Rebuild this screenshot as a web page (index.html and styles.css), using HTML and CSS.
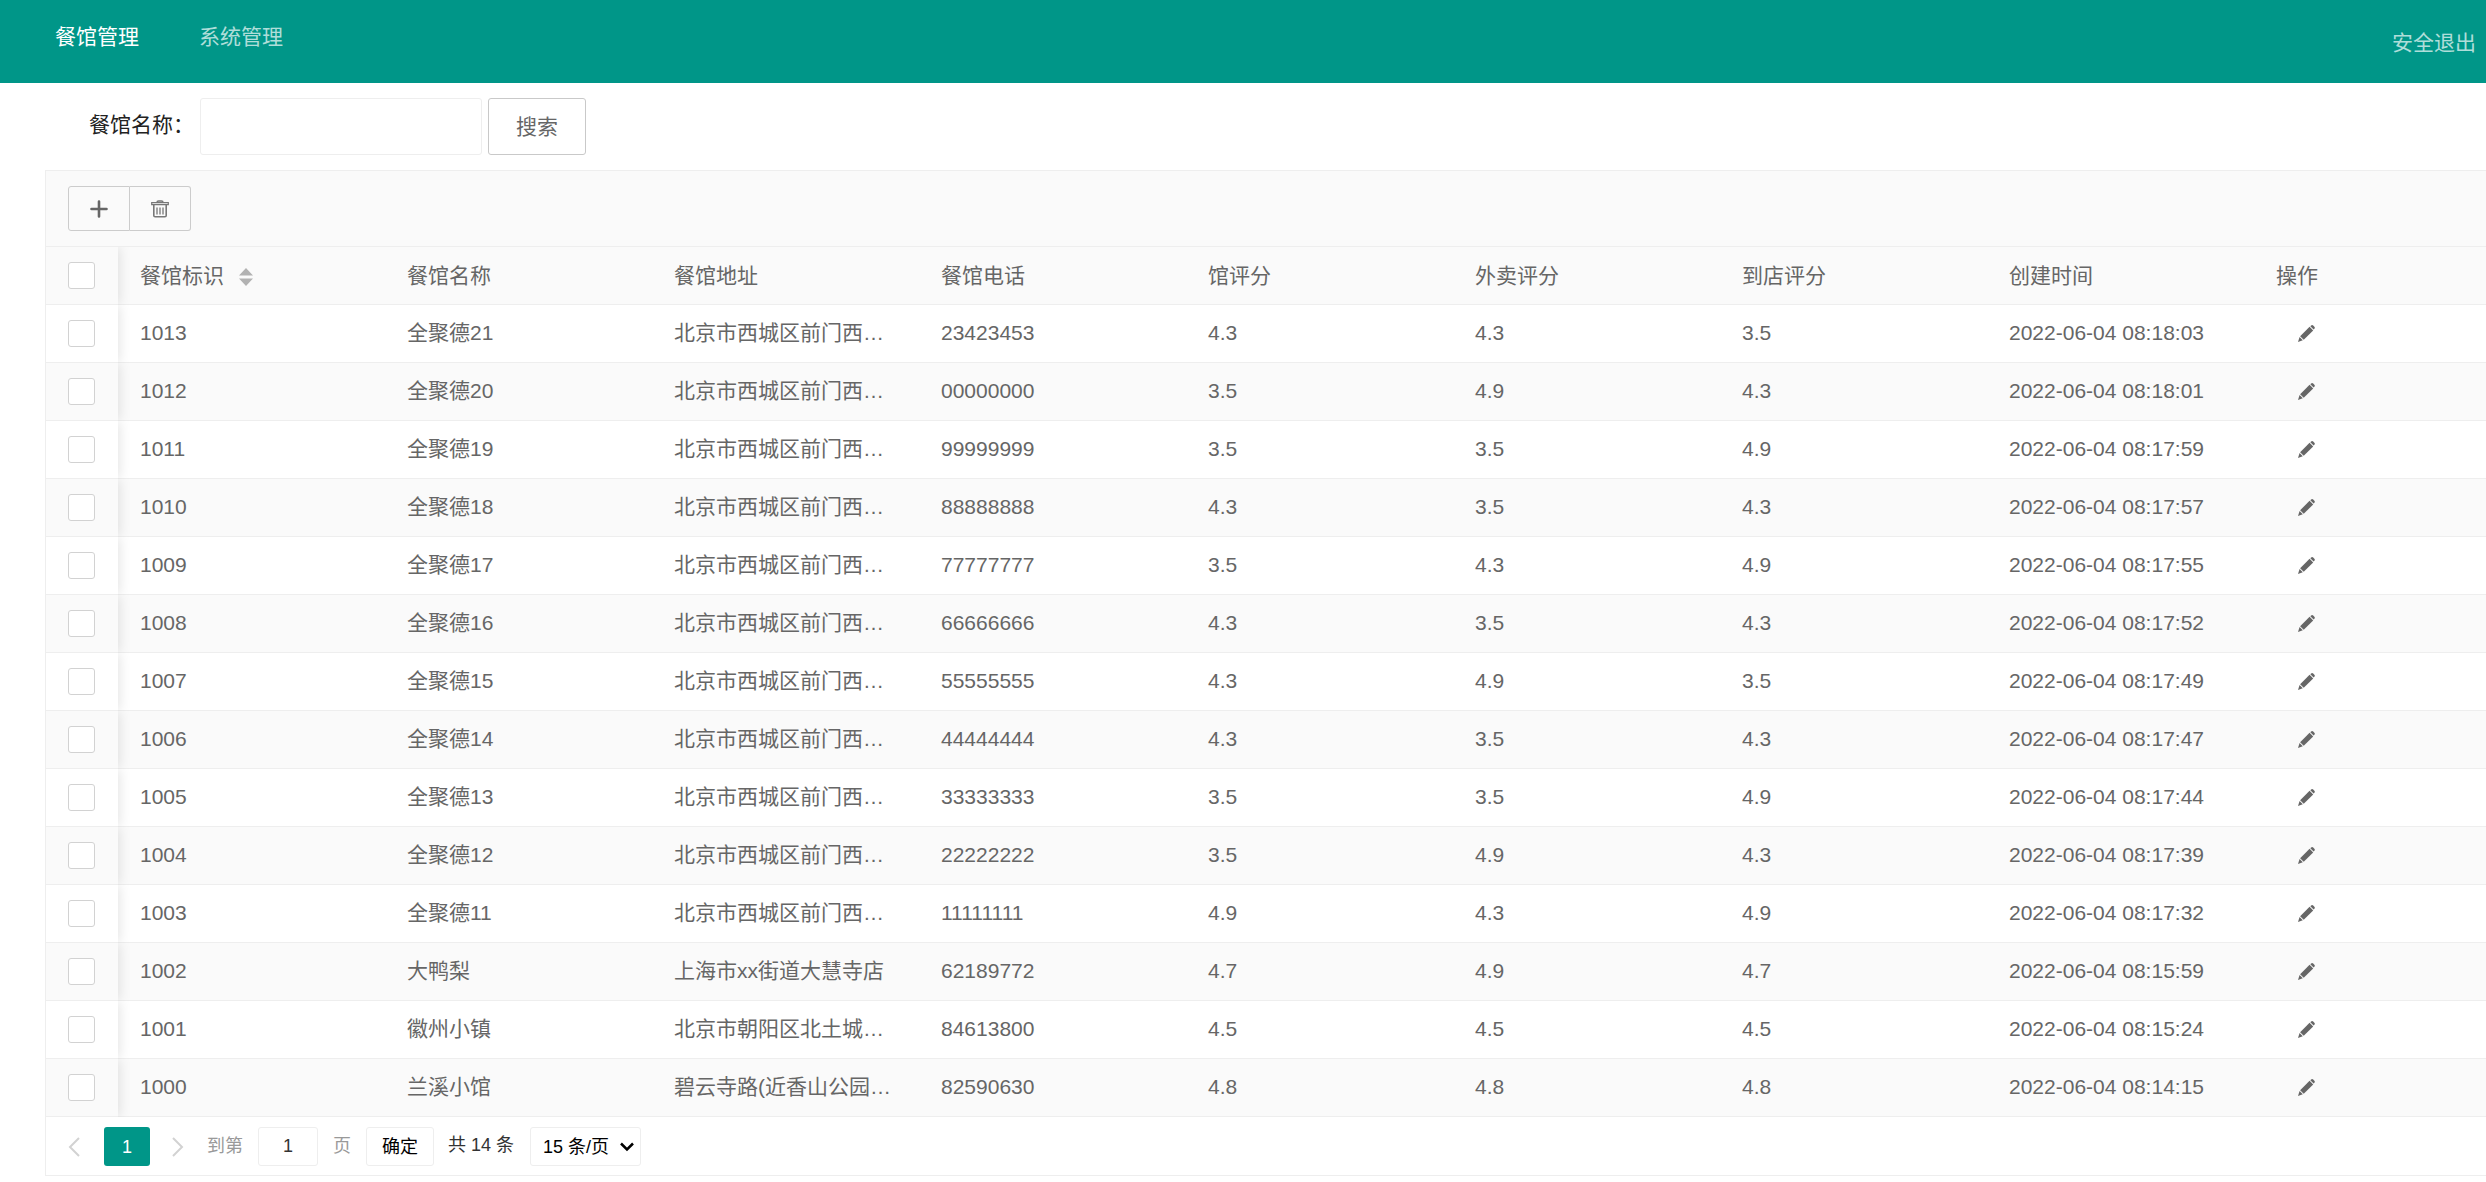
FILE: index.html
```
<!DOCTYPE html>
<html lang="zh-CN">
<head>
    <meta charset="utf-8">
    <title>餐馆管理</title>
    <link rel="stylesheet" href="styles.css">
</head>
<body>
    <!-- 图标 -->
    <svg class="icon-defs" aria-hidden="true">
        <symbol id="icon-edit" viewBox="0 0 16 16">
            <path d="M11.6 1.1l.7-.6a1.5 1.5 0 0 1 2 0l1.1 1.1a1.5 1.5 0 0 1 0 2l-.7.7z"/>
            <path d="M10.9 1.7l3.4 3.4-8.9 8.8-3.4-3.3z"/>
            <path d="M1.5 11.4l3 3L0 16z"/>
        </symbol>
    </svg>

    <div class="header">
        <nav class="nav">
            <a class="active" href="#">餐馆管理</a>
            <a href="#">系统管理</a>
        </nav>
        <a class="logout" href="#">安全退出</a>
    </div>

    <form class="search" onsubmit="return false">
        <label for="keyword">餐馆名称：</label>
        <input type="text" id="keyword">
        <button type="submit">搜索</button>
    </form>

    <div class="table-view">
        <div class="toolbar">
            <button type="button" aria-label="添加">
                <svg width="18" height="18" viewBox="0 0 18 18"><path d="M9 1.5v15M1.5 9h15" stroke="#666" stroke-width="2.6" stroke-linecap="round"/></svg>
            </button>
            <button type="button" aria-label="删除">
                <svg width="18" height="18" viewBox="0 0 18 18" fill="none" stroke="#777">
                    <path d="M6 2.5q0-1.5 1.5-1.5h3q1.500 0 1.500 1.5" stroke-width="1.5"/>
                    <path d="M.7 2.7h16.600v2H.7z" stroke-width="1.2"/>
                    <path d="M2.8 5v10.5q0 1.300 1.3 1.300h9.800q1.300 0 1.300-1.300V5" stroke-width="1.6"/>
                    <path d="M6 7.5v7M9 7.5v7M12 7.5v7" stroke-width="1.3"/>
                </svg>
            </button>
        </div>

        <table>
            <colgroup>
                <col class="col-check">
                <col class="col-data" span="8">
                <col>
            </colgroup>
            <thead>
                <tr>
                    <th class="check"><input type="checkbox" aria-label="全选"></th>
                    <th>餐馆标识
                        <svg class="sort" width="14" height="18" viewBox="0 0 14 18"><path d="M7 0l7 7.5H0zM7 18l7-7.5H0z" fill="#b2b2b2"/></svg>
                    </th>
                    <th>餐馆名称</th>
                    <th>餐馆地址</th>
                    <th>餐馆电话</th>
                    <th>馆评分</th>
                    <th>外卖评分</th>
                    <th>到店评分</th>
                    <th>创建时间</th>
                    <th>操作</th>
                </tr>
            </thead>
            <tbody id="rows"></tbody>
        </table>

        <div class="pager">
            <button type="button" class="arrow" aria-label="上一页">
                <svg width="12" height="20" viewBox="0 0 12 20"><path d="M11 1L2 10l9 9" fill="none" stroke="#d2d2d2" stroke-width="2"/></svg>
            </button>
            <button type="button" class="current">1</button>
            <button type="button" class="arrow" aria-label="下一页">
                <svg width="12" height="20" viewBox="0 0 12 20"><path d="M1 1l9 9-9 9" fill="none" stroke="#d2d2d2" stroke-width="2"/></svg>
            </button>
            <label class="goto">到第 <input type="text" value="1"> 页</label>
            <button type="button" class="confirm">确定</button>
            <span class="total">共 14 条</span>
            <span class="limit">
                <select aria-label="每页条数">
                    <option>15 条/页</option>
                </select>
                <svg width="14" height="10" viewBox="0 0 14 10"><path d="M1 1.5l6 6 6-6" fill="none" stroke="#000" stroke-width="2.5"/></svg>
            </span>
        </div>
    </div>

    <script>
        // 标识, 名称, 地址, 电话, 馆评分, 外卖评分, 到店评分, 创建时间
        var data = [
            ['1013', '全聚德21', '北京市西城区前门西…', '23423453', '4.3', '4.3', '3.5', '2022-06-04 08:18:03'],
            ['1012', '全聚德20', '北京市西城区前门西…', '00000000', '3.5', '4.9', '4.3', '2022-06-04 08:18:01'],
            ['1011', '全聚德19', '北京市西城区前门西…', '99999999', '3.5', '3.5', '4.9', '2022-06-04 08:17:59'],
            ['1010', '全聚德18', '北京市西城区前门西…', '88888888', '4.3', '3.5', '4.3', '2022-06-04 08:17:57'],
            ['1009', '全聚德17', '北京市西城区前门西…', '77777777', '3.5', '4.3', '4.9', '2022-06-04 08:17:55'],
            ['1008', '全聚德16', '北京市西城区前门西…', '66666666', '4.3', '3.5', '4.3', '2022-06-04 08:17:52'],
            ['1007', '全聚德15', '北京市西城区前门西…', '55555555', '4.3', '4.9', '3.5', '2022-06-04 08:17:49'],
            ['1006', '全聚德14', '北京市西城区前门西…', '44444444', '4.3', '3.5', '4.3', '2022-06-04 08:17:47'],
            ['1005', '全聚德13', '北京市西城区前门西…', '33333333', '3.5', '3.5', '4.9', '2022-06-04 08:17:44'],
            ['1004', '全聚德12', '北京市西城区前门西…', '22222222', '3.5', '4.9', '4.3', '2022-06-04 08:17:39'],
            ['1003', '全聚德11', '北京市西城区前门西…', '11111111', '4.9', '4.3', '4.9', '2022-06-04 08:17:32'],
            ['1002', '大鸭梨', '上海市xx街道大慧寺店', '62189772', '4.7', '4.9', '4.7', '2022-06-04 08:15:59'],
            ['1001', '徽州小镇', '北京市朝阳区北土城…', '84613800', '4.5', '4.5', '4.5', '2022-06-04 08:15:24'],
            ['1000', '兰溪小馆', '碧云寺路(近香山公园…', '82590630', '4.8', '4.8', '4.8', '2022-06-04 08:14:15']
        ];

        var html = '';
        for (var i = 0; i < data.length; i++) {
            html += '<tr><td class="check"><input type="checkbox" aria-label="选择 ' + data[i][0] + '"></td>';
            for (var j = 0; j < data[i].length; j++) {
                html += '<td>' + data[i][j] + '</td>';
            }
            html += '<td><button type="button" class="edit" aria-label="编辑 ' + data[i][0] + '">'
                + '<svg width="17" height="17" fill="#666"><use href="#icon-edit"/></svg></button></td></tr>';
        }
        document.getElementById('rows').innerHTML = html;
    </script>
</body>
</html>
```
FILE: styles.css
```
* {
    box-sizing: border-box;
}

body {
    margin: 0;
    background-color: #fff;
    color: #222;
    font: 21px/36px "Liberation Sans", "Noto Sans CJK SC", sans-serif;
}

button, input, select {
    margin: 0;
    padding: 0;
    font: inherit;
    color: inherit;
    background-color: #fff;
    border: 1px solid #eee;
    border-radius: 3px;
}

button {
    cursor: pointer;
}

.icon-defs {
    display: none;
}

/* 顶部导航 */
.header {
    display: flex;
    justify-content: space-between;
    height: 83px;
    padding: 19px 10px 0 55px;
    background-color: #009688;
}

.nav {
    display: flex;
    gap: 60px;
}

.header a {
    color: rgba(255, 255, 255, 0.7);
    text-decoration: none;
}

.header .active {
    color: #fff;
}

.logout {
    padding-top: 6px;
}

/* 搜索 */
.search {
    display: flex;
    padding: 15px 0 15px 89px;
}

.search label {
    width: 111px;
    padding-top: 9px;
    white-space: nowrap;
}

.search input {
    width: 282px;
    height: 57px;
    padding-left: 15px;
}

.search button {
    width: 98px;
    height: 57px;
    margin-left: 6px;
    border-color: #c9c9c9;
    color: #666;
}

/* 表格 */
.table-view {
    margin-left: 45px;
    border: 1px solid #eee;
    border-right: 0;
    color: #666;
}

.toolbar {
    display: flex;
    padding: 15px 22px;
    background-color: #fafafa;
    border-bottom: 1px solid #eee;
}

.toolbar button {
    display: flex;
    align-items: center;
    justify-content: center;
    width: 62px;
    height: 45px;
    background-color: transparent;
    border-color: #ccc;
}

.toolbar button:first-child {
    border-radius: 3px 0 0 3px;
}

.toolbar button:last-child {
    width: 61px;
    border-left: 0;
    border-radius: 0 3px 3px 0;
}

table {
    width: 100%;
    table-layout: fixed;
    border-collapse: separate;
    border-spacing: 0;
}

.col-check {
    width: 72px;
}

.col-data {
    width: 267px;
}

th, td {
    height: 58px;
    padding: 0 22px;
    border-bottom: 1px solid #eee;
    font-weight: normal;
    text-align: left;
    white-space: nowrap;
    overflow: hidden;
    text-overflow: ellipsis;
}

td {
    padding-bottom: 2px;
}

thead tr, tbody tr:nth-child(even) {
    background-color: #fafafa;
}

.check {
    padding-bottom: 0;
    overflow: visible;
    box-shadow: 1px 0 12px rgba(0, 0, 0, 0.12);
    clip-path: inset(0 -12px 0 0);
}

.check input {
    display: block;
    appearance: none;
    width: 27px;
    height: 27px;
    border-color: #d2d2d2;
}

.sort {
    margin-left: 9px;
    vertical-align: -3px;
}

.edit {
    display: block;
    padding: 2px 22px 0;
    background-color: transparent;
    border: 0;
}

.edit svg {
    display: block;
}

/* 分页 */
.pager {
    display: flex;
    padding: 10px 22px 9px;
    font-size: 18px;
    color: #333;
}

.pager button, .pager input, .pager select {
    height: 39px;
}

.pager .arrow {
    display: flex;
    align-items: center;
    width: 36px;
    background-color: transparent;
    border: 0;
}

.pager .current {
    width: 46px;
    margin-right: 22px;
    background-color: #009688;
    border: 0;
    color: #fff;
}

.goto {
    margin-left: -1px;
    color: #999;
}

.goto input {
    width: 60px;
    margin: 0 10px;
    color: #333;
    text-align: center;
}

.pager .confirm {
    width: 68px;
    margin: 0 14px 0 15px;
    color: #000;
}

.limit {
    position: relative;
    margin-left: 16px;
}

.limit select {
    appearance: none;
    width: 111px;
    padding-left: 12px;
    color: #000;
}

/* 下拉箭头 */
.limit svg {
    position: absolute;
    right: 7px;
    top: 15px;
    pointer-events: none;
}
```
